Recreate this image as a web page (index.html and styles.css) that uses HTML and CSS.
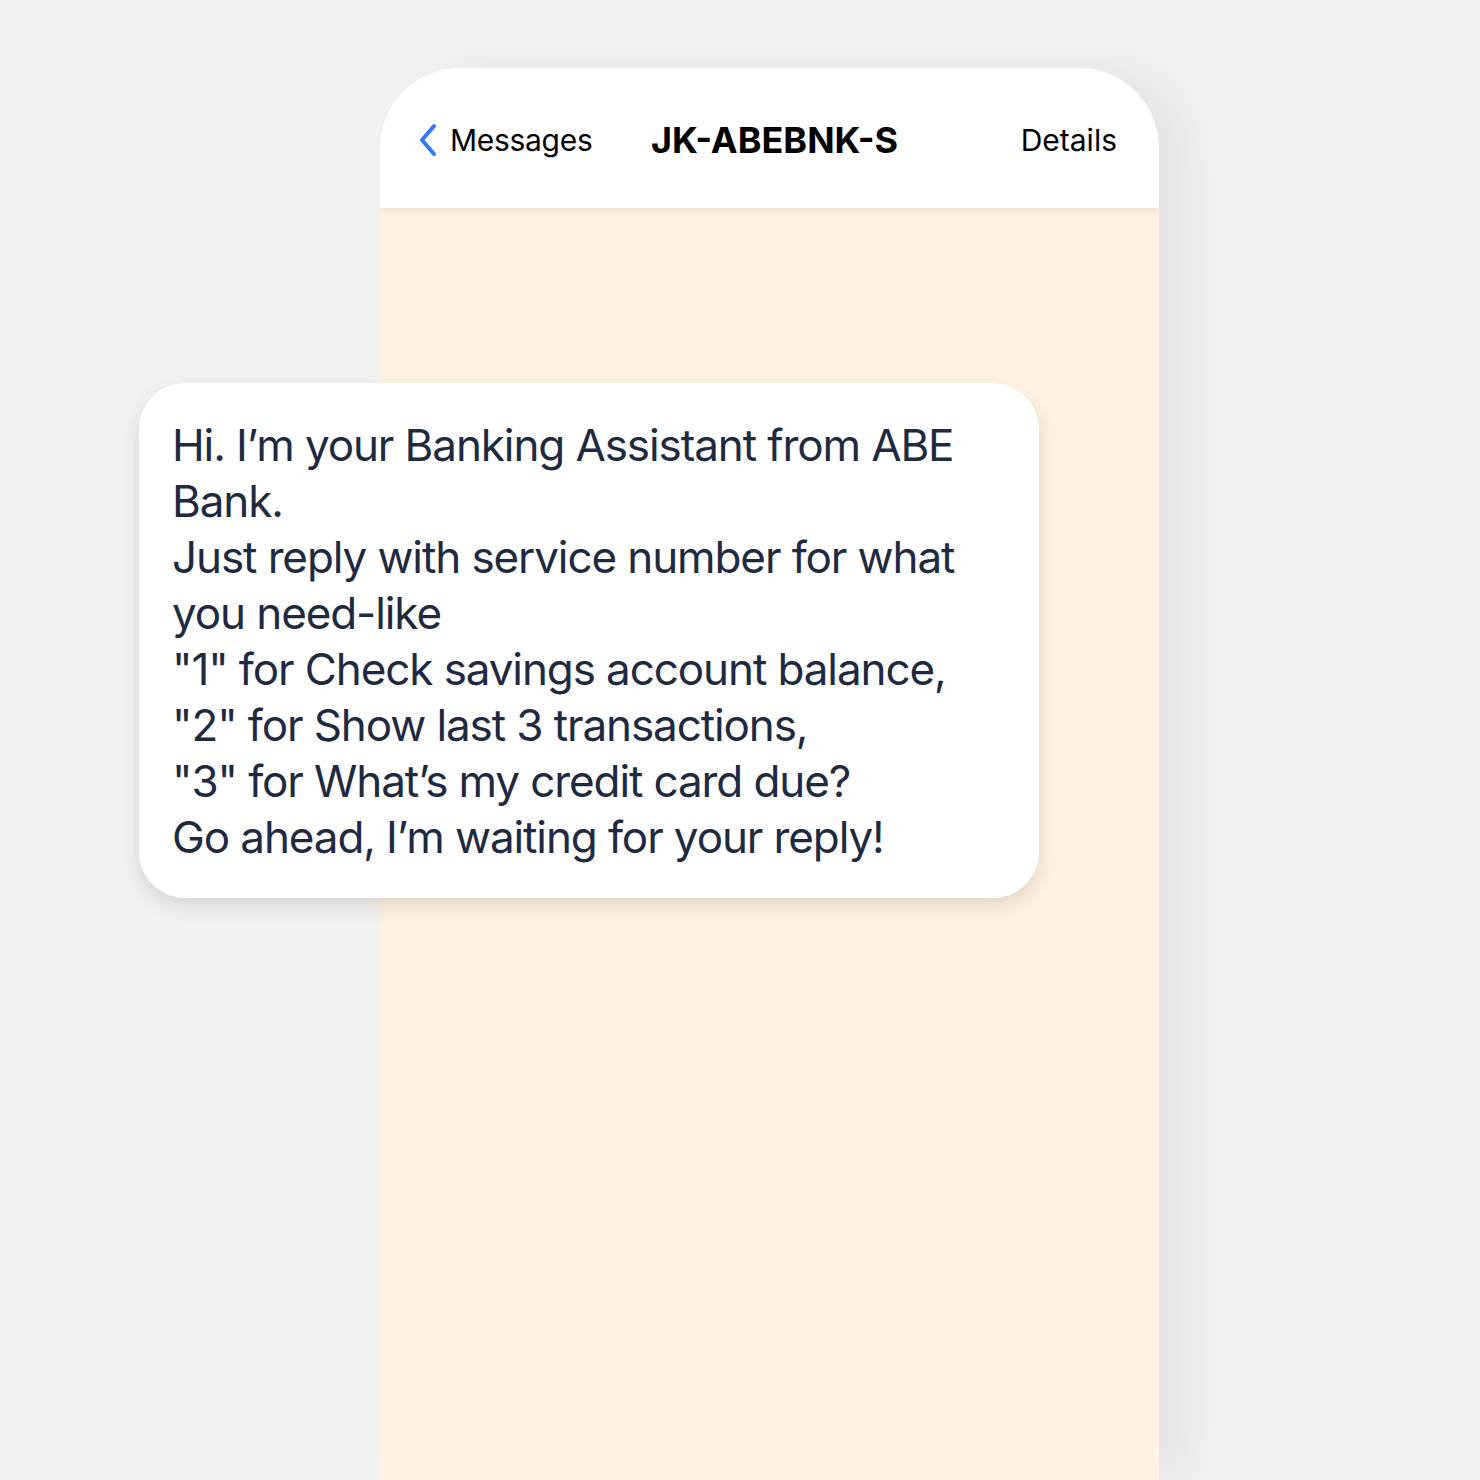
FILE: index.html
```html
<!DOCTYPE html>
<html lang="en">
<head>
  <meta charset="UTF-8">
  <title>JK-ABEBNK-S</title>
  <link rel="stylesheet" href="styles.css">
</head>
<body>

<div id="stage">
  <div id="phone">
    <div id="phone-header">
      <a class="back-link" href="#">
        <svg class="chevron" width="20" height="34" viewBox="0 0 20 34">
          <path d="M16 3 L4 17 L16 31" fill="none" stroke="#3478f6" stroke-width="4" stroke-linecap="round" stroke-linejoin="round"/>
        </svg>
        <span>Messages</span>
      </a>
      <span id="sender">JK-ABEBNK-S</span>
      <a class="details-link" href="#">Details</a>
    </div>
    <div id="thread"></div>
  </div>

  <div id="bubble">
    <div class="line">Hi. I’m your Banking Assistant from ABE</div>
    <div class="line">Bank.</div>
    <div class="line">Just reply with service number for what</div>
    <div class="line">you need-like</div>
    <div class="line">"1" for Check savings account balance,</div>
    <div class="line">"2" for Show last 3 transactions,</div>
    <div class="line">"3" for What’s my credit card due?</div>
    <div class="line">Go ahead, I’m waiting for your reply!</div>
  </div>
</div>

</body>
</html>
```

FILE: styles.css
```css
body { margin: 0; padding: 0; background: #f2f2f2; font-family: Inter, "Noto Sans", sans-serif; overflow: hidden; }
#stage {
  position: relative;
  width: 1480px;
  height: 1480px;
  padding-top: 68px;
  box-sizing: border-box;
}
#phone {
  margin-left: 380px;
  width: 779px;
  height: 1412px;
  border-radius: 80px 80px 0 0;
  background: #fdf2e3;
  box-shadow: 30px 0 50px rgba(0,0,0,0.06);
  display: flex;
  flex-direction: column;
  overflow: hidden;
}
#phone-header {
  height: 140px;
  background: white;
  display: flex;
  align-items: center;
  padding: 4px 42px 0 38px;
  box-sizing: border-box;
  box-shadow: 0 2px 6px rgba(120,100,60,0.12);
  position: relative;
  z-index: 1;
}
.back-link {
  display: flex;
  align-items: center;
  gap: 12px;
  color: black;
  text-decoration: none;
  font-size: 30px;
  letter-spacing: -0.3px;
}
#sender {
  flex: 1;
  text-align: center;
  font-size: 36px;
  font-weight: 700;
  color: black;
  padding-right: 64px;
}
.details-link {
  color: black;
  text-decoration: none;
  font-size: 30px;
}
#thread { flex: 1; }
#bubble {
  position: absolute;
  left: 139px;
  top: 383px;
  width: 900px;
  height: 515px;
  box-sizing: border-box;
  padding: 34px 34px 0 33px;
  background: white;
  border-radius: 46px;
  box-shadow: 0 8px 18px rgba(110,90,50,0.18);
  color: #1e2a42;
  font-size: 44px;
  line-height: 56px;
  letter-spacing: -1.1px;
}
.line { white-space: nowrap; }
```
